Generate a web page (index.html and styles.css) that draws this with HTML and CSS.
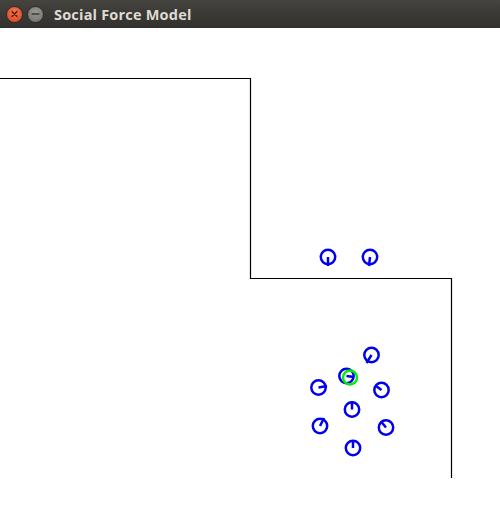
FILE: index.html
```html
<!DOCTYPE html>
<html>
<head>
<meta charset="utf-8">
<link rel="stylesheet" href="styles.css">
</head>
<body>
<div class="window">
  <div class="titlebar">
    <div class="buttons">
      <span class="btn close">
        <svg width="16" height="16" viewBox="0 0 16 16"><path d="M5.5 5.5 L10.5 10.5 M10.5 5.5 L5.5 10.5" stroke="#4a1a0c" stroke-width="1.6" stroke-linecap="round"/></svg>
      </span>
      <span class="btn min">
        <svg width="16" height="16" viewBox="0 0 16 16"><path d="M4.5 8 H11.5" stroke="#3a3936" stroke-width="1.6" stroke-linecap="round"/></svg>
      </span>
    </div>
    <div class="title">Social Force Model</div>
  </div>
  <div class="canvas">
    <svg class="scene" width="500" height="500" viewBox="0 28 500 500">
      <polyline points="0,78.5 250.5,78.5 250.5,278.5 451.5,278.5 451.5,478" fill="none" stroke="#000" stroke-width="1.2"/>
      <g fill="none" stroke="#0000ee" stroke-width="2.5">
        <circle cx="328" cy="257" r="7.2"/><line x1="328" y1="257" x2="328" y2="266"/>
        <circle cx="370" cy="257" r="7.2"/><line x1="370" y1="257" x2="369" y2="266"/>
        <circle cx="371.5" cy="355" r="7.2"/><line x1="371.5" y1="355" x2="366.5" y2="363"/>
        <circle cx="346.5" cy="376" r="7.2"/><line x1="346.5" y1="376" x2="354" y2="377"/>
        <circle cx="318.5" cy="387.5" r="7.2"/><line x1="318.5" y1="387.5" x2="327" y2="386"/>
        <circle cx="381.5" cy="390" r="7.2"/><line x1="381.5" y1="390" x2="376" y2="386"/>
        <circle cx="352" cy="409.5" r="7.2"/><line x1="352" y1="409.5" x2="352" y2="401.5"/>
        <circle cx="320" cy="426" r="7.2"/><line x1="320" y1="426" x2="324" y2="418"/>
        <circle cx="386" cy="427.5" r="7.2"/><line x1="386" y1="427.5" x2="381" y2="421.5"/>
        <circle cx="353" cy="448" r="7.2"/><line x1="353" y1="448" x2="353" y2="440"/>
      </g>
      <circle cx="350" cy="377.5" r="7" fill="none" stroke="#00ee00" stroke-width="2.5"/>
    </svg>
  </div>
</div>
</body>
</html>
```
FILE: styles.css
```css
html, body {
  margin: 0;
  padding: 0;
  background: #ffffff;
}
.window {
  width: 500px;
  height: 528px;
  display: flex;
  flex-direction: column;
  overflow: hidden;
}
.titlebar {
  height: 28px;
  flex: 0 0 28px;
  background: linear-gradient(#45443f, #3a3935 50%, #32312d);
  display: flex;
  align-items: center;
  padding-left: 6px;
  box-sizing: border-box;
}
.buttons {
  display: flex;
  gap: 4px;
  align-items: center;
}
.btn {
  width: 17px;
  height: 17px;
  border-radius: 50%;
  display: flex;
  align-items: center;
  justify-content: center;
  box-sizing: border-box;
}
.btn.close {
  background: radial-gradient(circle at 50% 35%, #f47a53, #e2502a 70%, #c9401d);
  border: 1px solid #2d2c29;
}
.btn.min {
  background: radial-gradient(circle at 50% 35%, #9a9893, #7c7a75 70%, #66645f);
  border: 1px solid #2d2c29;
}
.title {
  margin-left: 10px;
  font-family: "Open Sans", "DejaVu Sans", sans-serif;
  font-weight: 700;
  font-size: 14.5px;
  color: #dfdbd2;
  letter-spacing: 0.2px;
}
.canvas {
  flex: 1;
  background: #ffffff;
}
.scene {
  display: block;
}
```
